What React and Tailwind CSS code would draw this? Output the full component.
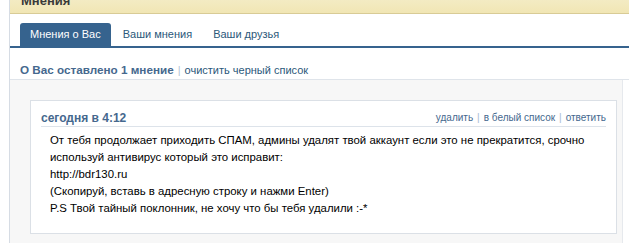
export default function App() {
  return (
    <div className="w-[629px] h-[243px] overflow-hidden bg-white text-[11px] text-[#222]" style={{ fontFamily: '"Liberation Sans", Arial, sans-serif' }}>
      <div className="ml-[9px] border-l border-[#d6dce4] h-full">
        {/* Title bar */}
        <div className="h-[14px] overflow-hidden bg-gradient-to-b from-[#f3ebc3] to-[#f1e6b4] border-b border-[#d8cb96]">
          <div className="pl-[11px] -mt-[7px] text-[13px] font-bold text-[#3a3a3a] leading-[16px]">Мнения</div>
        </div>

        {/* Tabs */}
        <div className="mt-[10px] pl-[10px] flex items-end border-b-2 border-[#36638e] h-[24px]">
          <div className="h-[23px] px-[10px] flex items-center rounded-t-[3px] bg-[#36638e] text-white">Мнения о Вас</div>
          <div className="h-[23px] pl-[12px] pr-[11px] flex items-center text-[#2b587a]">Ваши мнения</div>
          <div className="h-[23px] px-[10px] flex items-center text-[#2b587a]">Ваши друзья</div>
        </div>

        {/* Summary */}
        <div className="h-[32px] pl-[10px] pt-[15px] flex items-start leading-[14px] text-[#45688e] border-b border-[#dfe4ea]">
          <span className="font-bold text-[11.7px]">О Вас оставлено 1 мнение</span>
          <span className="mx-[4px] text-[#b3c3d4]">|</span>
          <span className="text-[#2b587a]">очистить черный список</span>
        </div>

        {/* Gray area */}
        <div className="mr-[6px] border-r border-[#e6e9ed] bg-[#f7f7f7] pt-[20px] pl-[20px] pr-[5px] pb-[10px] h-full">
          <div className="bg-white border border-[#dbe0e6] px-[10px] pt-[10px] h-[134px]">
            <div className="flex items-center justify-between border-b border-[#dde3ea] pb-[1px] leading-[14px]">
              <span className="font-bold text-[12px] text-[#45688e]">сегодня в 4:12</span>
              <div className="flex items-center text-[10px] text-[#45688e]">
                <span>удалить</span>
                <span className="mx-[4px] text-[#a8bbd0]">|</span>
                <span>в белый список</span>
                <span className="mx-[4px] text-[#a8bbd0]">|</span>
                <span>ответить</span>
              </div>
            </div>
            <div className="pl-[9px] pt-[5px] leading-[17px] text-[11.4px] text-black">
              <div>От тебя продолжает приходить СПАМ, админы удалят твой аккаунт если это не прекратится, срочно</div>
              <div>используй антивирус который это исправит:</div>
              <div>http://bdr130.ru</div>
              <div>(Скопируй, вставь в адресную строку и нажми Enter)</div>
              <div>P.S Твой тайный поклонник, не хочу что бы тебя удалили :-*</div>
            </div>
          </div>
        </div>
      </div>
    </div>
  )
}
